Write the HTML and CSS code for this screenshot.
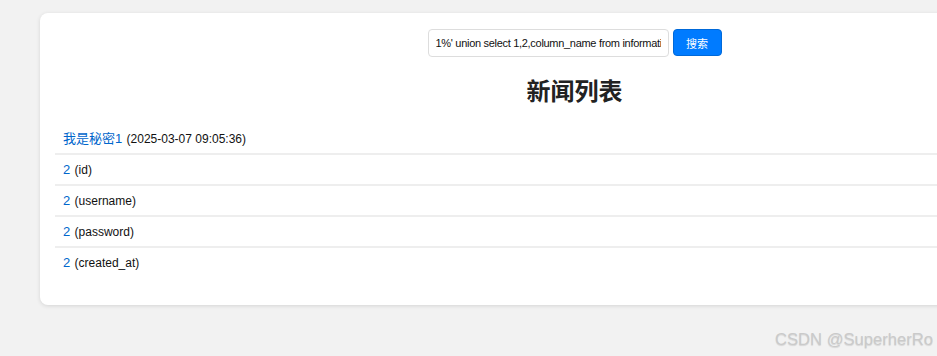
FILE: index.html
```
<!DOCTYPE html>
<html lang="zh-CN">
<head>
<meta charset="utf-8">
<title>新闻列表</title>
<link rel="stylesheet" href="styles.css">
</head>
<body>
<div class="page">
  <div class="card">
    <form class="search">
      <input class="search-input" type="text" value="1%' union select 1,2,column_name from information_schema.columns where table_name='users' #">
      <button class="search-btn" type="button">搜索</button>
    </form>
    <h1 class="title">新闻列表</h1>
    <ul class="news">
      <li class="news-item"><a class="news-link" href="#">我是秘密1</a> <span class="news-meta">(2025-03-07 09:05:36)</span></li>
      <li class="news-item"><a class="news-link" href="#">2</a> <span class="news-meta">(id)</span></li>
      <li class="news-item"><a class="news-link" href="#">2</a> <span class="news-meta">(username)</span></li>
      <li class="news-item"><a class="news-link" href="#">2</a> <span class="news-meta">(password)</span></li>
      <li class="news-item last"><a class="news-link" href="#">2</a> <span class="news-meta">(created_at)</span></li>
    </ul>
  </div>
</div>
<div class="watermark">CSDN @SuperherRo</div>
</body>
</html>
```
FILE: styles.css
```
html, body {
  margin: 0;
  padding: 0;
  background: #f2f2f2;
  overflow: hidden;
  width: 937px;
  height: 356px;
}
body {
  font-family: "Liberation Sans", Arial, "Noto Sans CJK SC", sans-serif;
  color: #111;
  position: relative;
}
.page {
  padding: 13px 0 0 40px;
  border-top: 3px solid #f7f7f7;
  margin-top: -3px;
}
.card {
  width: 1069px;
  box-sizing: border-box;
  background: #fff;
  border-radius: 8px;
  box-shadow: 0 1px 4px rgba(0,0,0,0.12);
  padding: 16px 15px 28px;
}
.search {
  display: flex;
  justify-content: center;
  align-items: flex-start;
  gap: 4px;
  margin: 0;
}
.search-input {
  width: 241px;
  height: 28px;
  box-sizing: border-box;
  border: 1px solid #ddd;
  border-radius: 4px;
  padding: 0 7px;
  font-family: "Liberation Sans", Arial, sans-serif;
  font-size: 11px;
  letter-spacing: -0.3px;
  color: #111;
  outline: none;
}
.search-btn {
  width: 49px;
  height: 27px;
  border: 1px solid #0069d9;
  border-radius: 4px;
  background: #007bff;
  color: #fff;
  font-family: "Noto Sans CJK SC", sans-serif;
  font-size: 11px;
  padding: 0;
}
.title {
  margin: 19px 0 20px;
  text-align: center;
  font-size: 24px;
  line-height: 28px;
  font-weight: bold;
  color: #222;
  font-family: "Noto Sans CJK SC", sans-serif;
}
.news {
  list-style: none;
  margin: 0;
  padding: 0;
}
.news-item {
  padding: 7px 8px;
  height: 15px;
  line-height: 15px;
  border-bottom: 2px solid #eee;
  font-size: 12px;
}
.news-item.last {
  border-bottom: none;
}
.news-link {
  color: #0066cc;
  text-decoration: none;
  font-size: 13px;
  line-height: 15px;
}
.news-meta {
  color: #111;
  margin-left: 1px;
}
.watermark {
  position: absolute;
  right: 4px;
  top: 330px;
  font-size: 16.6px;
  color: #cacaca;
  text-shadow: 0 1px 1px rgba(0,0,0,0.12);
  font-family: "Liberation Sans", Arial, sans-serif;
}
```
